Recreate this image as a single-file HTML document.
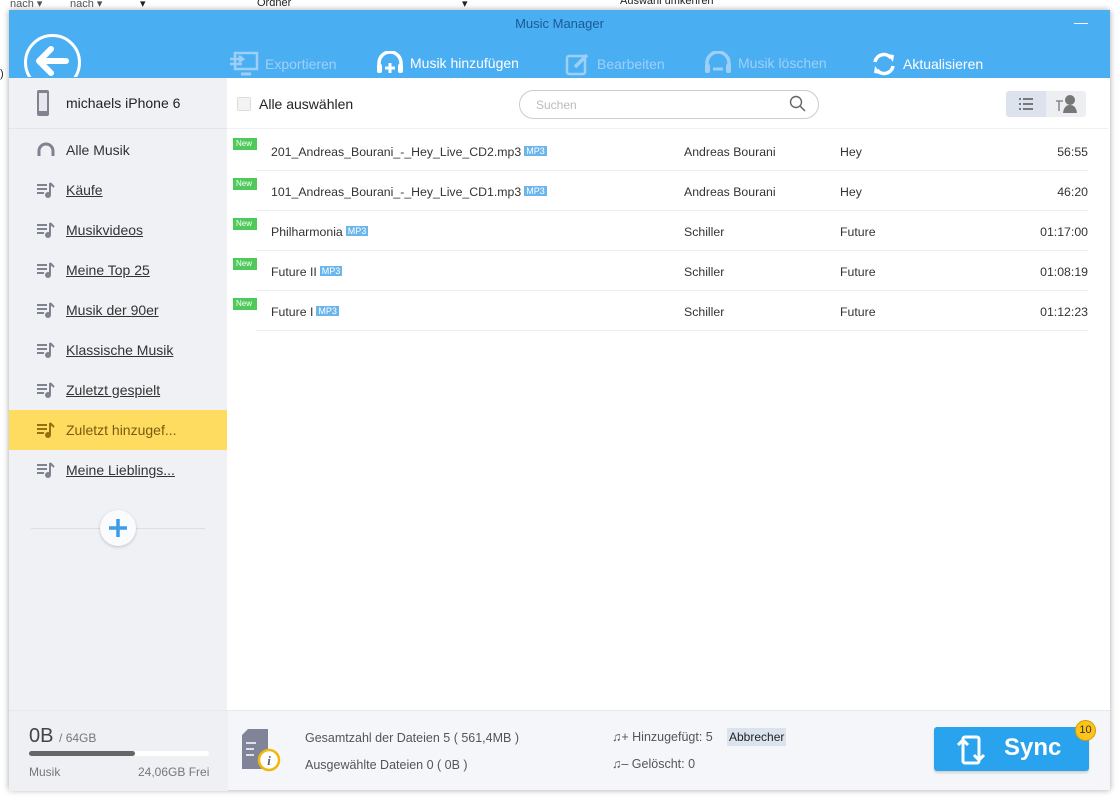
<!DOCTYPE html>
<html><head><meta charset="utf-8"><style>
*{box-sizing:border-box;margin:0;padding:0}
body{width:1120px;height:800px;overflow:hidden;background:#fff;font-family:"Liberation Sans",sans-serif;position:relative;color:#333}
.bgtxt{position:absolute;font-size:11px;color:#222}
#win{position:absolute;left:9px;top:10px;width:1101px;height:780px;background:#fff;box-shadow:0 0 6px rgba(0,0,0,.35)}
#top{position:absolute;left:0;top:0;width:1101px;height:68px;background:#4aaef3}
#title{position:absolute;top:6px;left:0;width:1101px;text-align:center;font-size:13px;color:#1a5b94}
.tb{position:absolute;top:41px;font-size:14px;color:#fff;display:flex;align-items:center;gap:6px}
.tb.dis{color:#9ed0f7}
#side{position:absolute;left:0;top:68px;width:218px;height:632px;background:#f0f1f5}
.it{position:absolute;left:0;width:218px;height:40px;display:flex;align-items:center;font-size:14px;color:#333}
.it span{text-decoration:underline}
.it svg{position:absolute;left:27px}
.it .t{position:absolute;left:57px}
#bot{position:absolute;left:0;top:700px;width:1101px;height:80px;background:#f5f6f9;border-top:1px solid #e6e8ec}
.row{position:absolute;left:219px;width:860px;height:40px;font-size:12.3px;color:#333}
.row .ln{position:absolute;left:28px;right:0;bottom:0;border-bottom:1px solid #ebedf0}
.new{position:absolute;left:5px;top:7px;background:#4fc95a;color:#fff;font-size:8px;padding:1px 3px;width:24px;height:12px}
.mp3{background:#6ab5ec;color:#fff;font-size:9px;padding:0 2px;margin-left:3px;vertical-align:2px}
</style></head><body>
<div class="bgtxt" style="left:10px;top:-3px;color:#555">nach ▾</div>
<div class="bgtxt" style="left:70px;top:-3px;color:#555">nach ▾</div>
<div class="bgtxt" style="left:140px;top:-3px">▾</div>
<div class="bgtxt" style="left:257px;top:-3px">Ordner</div>
<div class="bgtxt" style="left:462px;top:-3px">▾</div>
<div class="bgtxt" style="left:620px;top:-5px">Auswahl umkehren</div>
<div class="bgtxt" style="left:0;top:68px">)</div>
<div id="win">
<div id="top">
<div id="title">Music Manager</div>
<div style="position:absolute;right:22px;top:4px;color:#fff;font-size:14px">—</div>
<div style="position:absolute;left:15px;top:24px;width:57px;height:57px;border-radius:50%;border:3px solid #fff;clip-path:inset(0 0 14px 0)"></div>
<svg style="position:absolute;left:26px;top:36px" width="34" height="30" viewBox="0 0 34 30"><path d="M16 3 L4 15 L16 27 M4 15 H31" stroke="#fff" stroke-width="6" fill="none" stroke-linecap="round" stroke-linejoin="round"/></svg>
<div class="tb dis" style="left:220px"><svg width="30" height="26" viewBox="0 0 30 26"><rect x="6" y="2" width="22" height="16" fill="none" stroke="#9ed0f7" stroke-width="2.5"/><path d="M1 8h12M1 13h12M10 5l4 3-4 3" stroke="#9ed0f7" stroke-width="2.5" fill="none"/><path d="M12 23h10" stroke="#9ed0f7" stroke-width="3"/></svg>Exportieren</div>
<div class="tb" style="left:367px"><svg width="28" height="24" viewBox="0 0 28 24"><path d="M3 18V12a11 11 0 0 1 22 0v6" stroke="#fff" stroke-width="3.5" fill="none"/><rect x="1" y="13" width="5" height="9" rx="2" fill="#fff"/><rect x="22" y="13" width="5" height="9" rx="2" fill="#fff"/><path d="M14 12v10M9 17h10" stroke="#fff" stroke-width="3"/></svg>Musik hinzufügen</div>
<div class="tb dis" style="left:556px"><svg width="26" height="26" viewBox="0 0 26 26"><rect x="2" y="5" width="18" height="18" rx="2" fill="none" stroke="#9ed0f7" stroke-width="2.5"/><path d="M10 16l12-12" stroke="#9ed0f7" stroke-width="3.5"/></svg>Bearbeiten</div>
<div class="tb dis" style="left:695px"><svg width="28" height="24" viewBox="0 0 28 24"><path d="M3 18V12a11 11 0 0 1 22 0v6" stroke="#9ed0f7" stroke-width="3.5" fill="none"/><rect x="1" y="13" width="5" height="9" rx="2" fill="#9ed0f7"/><rect x="22" y="13" width="5" height="9" rx="2" fill="#9ed0f7"/><path d="M9 18h10" stroke="#9ed0f7" stroke-width="3"/></svg>Musik löschen</div>
<div class="tb" style="left:862px"><svg width="26" height="26" viewBox="0 0 26 26"><path d="M4 11a9 9 0 0 1 16-4M22 15a9 9 0 0 1-16 4" stroke="#fff" stroke-width="3.5" fill="none"/><path d="M16 3l7 1-1 7zM10 23l-7-1 1-7z" fill="#fff"/></svg>Aktualisieren</div>
</div>
<div id="side">
<div class="it" style="top:5px;height:40px"><svg width="14" height="28" viewBox="0 0 14 28" style="left:27px"><rect x="1" y="1" width="12" height="26" rx="2" fill="#7f8390"/><rect x="3" y="4" width="8" height="18" fill="#e6e8ee"/></svg><div class="t" style="color:#222">michaels iPhone 6</div></div>
<div style="position:absolute;left:0;top:50px;width:218px;border-top:1px solid #e3e5ea"></div>
<div class="it" style="top:52px"><svg width="20" height="16" viewBox="0 0 20 16"><path d="M3 14V9a7 7 0 0 1 14 0v5" stroke="#7f8390" stroke-width="3" fill="none"/></svg><div class="t">Alle Musik</div></div>
<div class="it" style="top:92px"><svg width="20" height="16" viewBox="0 0 20 16"><path d="M1 3h10M1 7h10M1 11h7" stroke="#7f8390" stroke-width="2"/><path d="M14 1v11" stroke="#7f8390" stroke-width="2"/><circle cx="12" cy="13" r="3" fill="#7f8390"/><path d="M14 1l4 4" stroke="#7f8390" stroke-width="2"/></svg><div class="t"><span>Käufe</span></div></div>
<div class="it" style="top:132px"><svg width="20" height="16" viewBox="0 0 20 16"><path d="M1 3h10M1 7h10M1 11h7" stroke="#7f8390" stroke-width="2"/><path d="M14 1v11M14 1l4 4" stroke="#7f8390" stroke-width="2"/><circle cx="12" cy="13" r="3" fill="#7f8390"/></svg><div class="t"><span>Musikvideos</span></div></div>
<div class="it" style="top:172px"><svg width="20" height="16" viewBox="0 0 20 16"><path d="M1 3h10M1 7h10M1 11h7" stroke="#7f8390" stroke-width="2"/><path d="M14 1v11M14 1l4 4" stroke="#7f8390" stroke-width="2"/><circle cx="12" cy="13" r="3" fill="#7f8390"/></svg><div class="t"><span>Meine Top 25</span></div></div>
<div class="it" style="top:212px"><svg width="20" height="16" viewBox="0 0 20 16"><path d="M1 3h10M1 7h10M1 11h7" stroke="#7f8390" stroke-width="2"/><path d="M14 1v11M14 1l4 4" stroke="#7f8390" stroke-width="2"/><circle cx="12" cy="13" r="3" fill="#7f8390"/></svg><div class="t"><span>Musik der 90er</span></div></div>
<div class="it" style="top:252px"><svg width="20" height="16" viewBox="0 0 20 16"><path d="M1 3h10M1 7h10M1 11h7" stroke="#7f8390" stroke-width="2"/><path d="M14 1v11M14 1l4 4" stroke="#7f8390" stroke-width="2"/><circle cx="12" cy="13" r="3" fill="#7f8390"/></svg><div class="t"><span>Klassische Musik</span></div></div>
<div class="it" style="top:292px"><svg width="20" height="16" viewBox="0 0 20 16"><path d="M1 3h10M1 7h10M1 11h7" stroke="#7f8390" stroke-width="2"/><path d="M14 1v11M14 1l4 4" stroke="#7f8390" stroke-width="2"/><circle cx="12" cy="13" r="3" fill="#7f8390"/></svg><div class="t"><span>Zuletzt gespielt</span></div></div>
<div class="it" style="top:332px;background:#fedc5f;color:#7a5a10"><svg width="20" height="16" viewBox="0 0 20 16"><path d="M1 3h10M1 7h10M1 11h7" stroke="#9a6d10" stroke-width="2"/><path d="M14 1v11M14 1l4 4" stroke="#9a6d10" stroke-width="2"/><circle cx="12" cy="13" r="3" fill="#9a6d10"/></svg><div class="t">Zuletzt hinzugef...</div></div>
<div class="it" style="top:372px"><svg width="20" height="16" viewBox="0 0 20 16"><path d="M1 3h10M1 7h10M1 11h7" stroke="#7f8390" stroke-width="2"/><path d="M14 1v11M14 1l4 4" stroke="#7f8390" stroke-width="2"/><circle cx="12" cy="13" r="3" fill="#7f8390"/></svg><div class="t"><span>Meine Lieblings...</span></div></div>
<div style="position:absolute;left:22px;top:450px;width:174px;border-top:1px solid #dcdee3"></div>
<div style="position:absolute;left:91px;top:432px;width:36px;height:36px;border-radius:50%;background:#fafbfc;box-shadow:0 1px 3px rgba(0,0,0,.2)"></div>
<svg style="position:absolute;left:99px;top:440px" width="20" height="20"><path d="M10 1v18M1 10h18" stroke="#3d9be9" stroke-width="3.5"/></svg>
</div>
<div style="position:absolute;left:228px;top:87px;width:14px;height:14px;border:1px solid #ddd;background:#f3f3f3;border-radius:2px"></div>
<div style="position:absolute;left:250px;top:86px;font-size:14px;color:#222">Alle auswählen</div>
<div style="position:absolute;left:510px;top:80px;width:300px;height:29px;border:1px solid #ccc;border-radius:15px;font-size:12px;color:#bbb;padding:7px 16px">Suchen</div>
<svg style="position:absolute;left:780px;top:85px" width="18" height="18"><circle cx="7" cy="7" r="5.5" stroke="#666" stroke-width="1.4" fill="none"/><path d="M11 11l5 5" stroke="#666" stroke-width="1.5"/></svg>
<div style="position:absolute;left:997px;top:81px;width:80px;height:26px;background:#eceef2;border-radius:3px"></div>
<div style="position:absolute;left:997px;top:81px;width:40px;height:26px;background:#dde3ec;border-radius:3px 0 0 3px"></div>
<svg style="position:absolute;left:1010px;top:88px" width="14" height="12"><path d="M0 1h2M4 1h10M0 6h2M4 6h10M0 11h2M4 11h10" stroke="#555" stroke-width="1.5"/></svg>
<svg style="position:absolute;left:1045px;top:83px" width="24" height="22"><path d="M2 8h7M5 8v10" stroke="#777" stroke-width="1.3"/><circle cx="16" cy="7" r="5" fill="#777"/><path d="M9 20q1-8 7-8q6 0 7 8z" fill="#777"/></svg>
<div style="position:absolute;left:219px;top:118px;width:880px;border-top:1px solid #eef0f2"></div>
<div class="row" style="top:121px"><div class="new">New</div><div style="position:absolute;left:43px;top:14px">201_Andreas_Bourani_-_Hey_Live_CD2.mp3<span class="mp3">MP3</span></div><div style="position:absolute;left:456px;top:14px">Andreas Bourani</div><div style="position:absolute;left:612px;top:14px">Hey</div><div style="position:absolute;right:0;top:14px">56:55</div><div class="ln"></div></div>
<div class="row" style="top:161px"><div class="new">New</div><div style="position:absolute;left:43px;top:14px">101_Andreas_Bourani_-_Hey_Live_CD1.mp3<span class="mp3">MP3</span></div><div style="position:absolute;left:456px;top:14px">Andreas Bourani</div><div style="position:absolute;left:612px;top:14px">Hey</div><div style="position:absolute;right:0;top:14px">46:20</div><div class="ln"></div></div>
<div class="row" style="top:201px"><div class="new">New</div><div style="position:absolute;left:43px;top:14px">Philharmonia<span class="mp3">MP3</span></div><div style="position:absolute;left:456px;top:14px">Schiller</div><div style="position:absolute;left:612px;top:14px">Future</div><div style="position:absolute;right:0;top:14px">01:17:00</div><div class="ln"></div></div>
<div class="row" style="top:241px"><div class="new">New</div><div style="position:absolute;left:43px;top:14px">Future II<span class="mp3">MP3</span></div><div style="position:absolute;left:456px;top:14px">Schiller</div><div style="position:absolute;left:612px;top:14px">Future</div><div style="position:absolute;right:0;top:14px">01:08:19</div><div class="ln"></div></div>
<div class="row" style="top:281px"><div class="new">New</div><div style="position:absolute;left:43px;top:14px">Future I<span class="mp3">MP3</span></div><div style="position:absolute;left:456px;top:14px">Schiller</div><div style="position:absolute;left:612px;top:14px">Future</div><div style="position:absolute;right:0;top:14px">01:12:23</div><div class="ln"></div></div>
<div id="bot">
<div style="position:absolute;left:0;top:0;width:219px;height:80px;background:#eff0f4"></div>
<div style="position:absolute;left:20px;top:14px;font-size:20px;color:#444">0B <span style="font-size:12px;color:#777">/ 64GB</span></div>
<div style="position:absolute;left:20px;top:40px;width:180px;height:5px;background:#fff;border-radius:3px"></div>
<div style="position:absolute;left:20px;top:40px;width:106px;height:5px;background:#666;border-radius:3px"></div>
<div style="position:absolute;left:20px;top:54px;font-size:12px;color:#777">Musik</div>
<div style="position:absolute;left:129px;top:54px;font-size:12px;color:#777">24,06GB Frei</div>
<svg style="position:absolute;left:233px;top:18px" width="40" height="44"><path d="M0 6l6-6h20v40H0z" fill="#7f8498"/><path d="M4 14h10M4 20h8M4 26h8" stroke="#fff" stroke-width="1.5"/><circle cx="27" cy="31" r="10" fill="#fff" stroke="#f0b90c" stroke-width="2.5"/><text x="27" y="36" font-size="13" font-style="italic" font-weight="bold" text-anchor="middle" fill="#5a5f70" font-family="Liberation Serif">i</text></svg>
<div style="position:absolute;left:296px;top:20px;font-size:12.5px;color:#555">Gesamtzahl der Dateien 5 ( 561,4MB )</div>
<div style="position:absolute;left:296px;top:47px;font-size:12.5px;color:#555">Ausgewählte Dateien 0 ( 0B )</div>
<div style="position:absolute;left:603px;top:19px;font-size:12.5px;color:#555">♫+ Hinzugefügt: 5</div>
<div style="position:absolute;left:718px;top:17px;background:#dbe3ee;font-size:12px;color:#222;padding:2px 2px">Abbrecher</div>
<div style="position:absolute;left:603px;top:46px;font-size:12.5px;color:#555">♫– Gelöscht: 0</div>
<div style="position:absolute;left:925px;top:16px;width:155px;height:44px;background:#2aa3ee;border-radius:3px;box-shadow:0 2px 2px rgba(0,0,0,.15)"></div>
<svg style="position:absolute;left:948px;top:24px" width="30" height="30"><rect x="6" y="2" width="16" height="26" rx="2" fill="none" stroke="#fff" stroke-width="3"/><path d="M1 10l5-5 5 5M17 20l5 5 5-5" stroke="#fff" stroke-width="3" fill="none"/></svg>
<div style="position:absolute;left:995px;top:23px;font-size:24px;font-weight:bold;color:#fff">Sync</div>
<div style="position:absolute;left:1066px;top:9px;width:21px;height:21px;border-radius:50%;background:#fcc419;border:1px solid #d69c00;font-size:11px;color:#333;text-align:center;line-height:19px">10</div>
</div>
</div>
</body></html>
